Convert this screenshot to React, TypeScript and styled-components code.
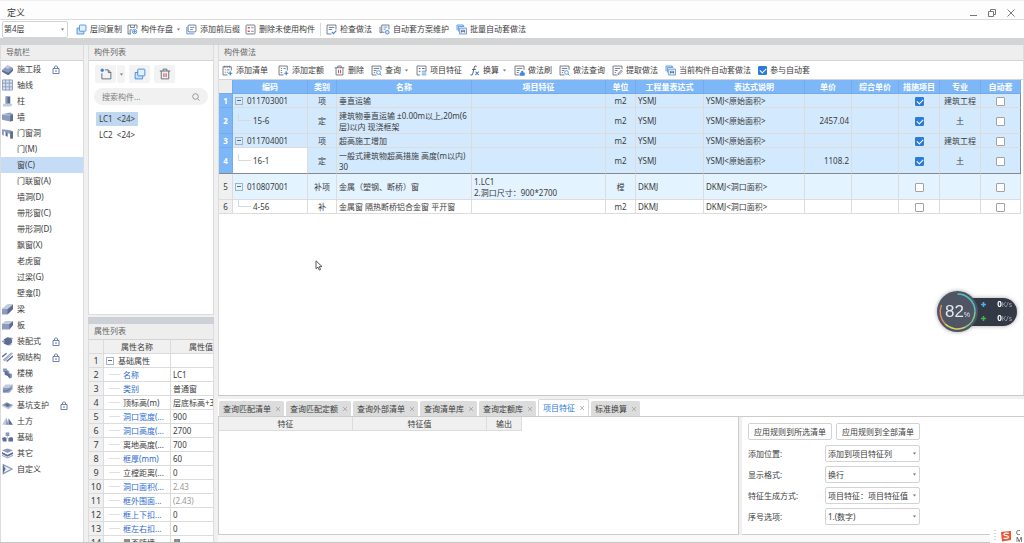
import React from 'react';
import styled, { createGlobalStyle, css } from 'styled-components';

const Global = createGlobalStyle`
  * { box-sizing: border-box; }
  body {
    margin: 0;
    background: #f0f0f0;
    color: #3c3c3c;
    font-family: "Noto Sans", "Noto Sans CJK SC", sans-serif;
    font-size: 8px;
    line-height: 12px;
  }
  button, input, select { font: inherit; color: inherit; margin: 0; }
  button { border: 0; padding: 0; background: none; cursor: pointer; white-space: nowrap; }
  ul { list-style: none; margin: 0; padding: 0; }
  h1, h2 { margin: 0; font-weight: 400; }
  svg { display: block; flex: none; }
`;

/* ---------- shell ---------- */

const Page = styled.div`
  height: 100vh;
  display: flex;
  flex-direction: column;
  overflow: hidden;
  border-bottom: 1px solid #c6c6c6;
`;

const TitleBar = styled.header`
  height: 19px;
  padding: 5px 8px 0 7px;
  display: flex;
  justify-content: space-between;
  align-items: center;
  background: #fdfdfd;
  border-top: 1px solid #f0f0f0;
`;

const Title = styled.h1`
  font-size: 9px;
  line-height: 13px;
`;

const WindowButtons = styled.div`
  display: flex;
  gap: 9px;
  color: #777;
`;

const TopToolbar = styled.div`
  height: 19px;
  padding: 0 2px;
  display: flex;
  align-items: center;
  background: #fff;
  border-top: 1px solid #dcdcdc;
`;

const Band = styled.div<{ $tint?: string }>`
  height: 7px;
  flex: none;
  background: ${p => p.$tint ?? '#d2d4d6'};
`;

const Splitter = styled.div<{ $line?: boolean }>`
  height: ${p => (p.$line ? '4px' : '3px')};
  flex: none;
  background: #f0f0f0;
  border-top: 1px solid ${p => (p.$line ? '#c8c8c8' : '#dcdcdc')};
`;

const Workspace = styled.div`
  flex: 1;
  min-height: 0;
  display: grid;
  grid-template-columns: 84px 126px minmax(0, 1fr);
  grid-template-rows: minmax(0, 1fr);
  column-gap: 4px;
`;

const Column = styled.div`
  min-height: 0;
  display: flex;
  flex-direction: column;
`;

const Panel = styled.section<{ $grow?: number }>`
  flex: ${p => p.$grow ?? 1} 1 0;
  min-height: 0;
  display: flex;
  flex-direction: column;
  overflow: hidden;
  background: #fff;
  border-left: 1px solid #dcdcdc;
  border-right: 1px solid #dcdcdc;
`;

const PanelTitle = styled.h2`
  height: 16px;
  flex: none;
  padding-left: 5px;
  font-size: 8px;
  line-height: 14px;
  color: #666;
  background: #eee;
  border-bottom: 1px solid #d4d4d4;
`;

/* ---------- toolbar parts ---------- */

const ToolGroup = styled.div<{ $gap: number; $after?: number }>`
  display: flex;
  align-items: center;
  gap: ${p => p.$gap}px;
  margin-right: ${p => p.$after ?? 0}px;
`;

const ToolButton = styled.button`
  display: flex;
  align-items: center;
  gap: 3px;
`;

const Separator = styled.span`
  width: 1px;
  height: 13px;
  background: #d8d8d8;
`;

const SelectBox = styled.div<{ $wide?: boolean }>`
  position: relative;
  width: ${p => (p.$wide ? '95px' : '66px')};
  height: 17px;
  flex: none;
  select {
    appearance: none;
    width: 100%;
    height: 100%;
    padding: 0 10px 0 ${p => (p.$wide ? '2px' : '1px')};
    border: 1px solid #d3d3d3;
    border-radius: 2px;
    background: #fff;
    outline: 0;
  }
  svg {
    position: absolute;
    right: 3px;
    top: 7px;
    pointer-events: none;
  }
`;

const Caret = () => (
  <svg width="5" height="3" viewBox="0 0 5 3"><path d="M.8.500h3.400L2.500 2.500z" fill="#777" /></svg>
);

function Select({ id, label, value, wide }: { id: string; label?: string; value: string; wide?: boolean }) {
  return (
    <SelectBox $wide={wide}>
      <select id={id} aria-label={label} defaultValue={value}><option>{value}</option></select>
      <Caret />
    </SelectBox>
  );
}

/* ---------- toolbar icons ---------- */

type Glyph = 'copy' | 'save' | 'prefix' | 'unused' | 'check' | 'scheme' | 'batch' | 'addList' | 'addQuota'
  | 'trash' | 'query' | 'feature' | 'fx' | 'brush' | 'extract' | 'new';

const INK = '#5b6473';
const BLUE = '#3f87d9';

const glyphs: Record<Glyph, React.ReactNode> = {
  copy: <><path d="M5 6H1.500v8.500h10V11" stroke={BLUE} fill="#cfe3f8" /><rect x="5" y="1.500" width="9.500" height="9" rx="1" stroke={BLUE} fill="#e3f0fd" /></>,
  save: <><path d="M6 14.500H1.500v-13h13V7" stroke={INK} /><path d="M5 1.500V5h6V1.500M4.500 14V8.500H7" stroke={INK} /><circle cx="11" cy="11" r="3.200" stroke={BLUE} /><path d="M11 9v4M9 11h4" stroke={BLUE} /></>,
  prefix: <><rect x="3" y="1.500" width="11.500" height="10" rx="1.500" stroke={INK} /><path d="M6 5h6M6 8h4" stroke={BLUE} /><path d="M1.200 4v10.300H12" stroke={BLUE} /></>,
  unused: <><rect x="1.500" y="1.500" width="13" height="13" rx="1" stroke={INK} /><path d="M4 5.500h3M4 10.500h3" stroke="#d9505a" strokeWidth="2.200" /><path d="M9 5.500h3.500M9 10.500h3.500" stroke={INK} /></>,
  check: <><path d="M8 14.500H1.500v-13h13V8" stroke={INK} /><path d="M4 5h8M4 8h5" stroke={INK} /><path d="M8.500 11.500l2.300 2.500L15 9.500" stroke={BLUE} strokeWidth="1.700" /></>,
  scheme: <><path d="M4 12.500H1.500V4M4 1.500h10.500V8M4 1.500v10.500h4" stroke={INK} /><path d="M6.500 4.500h5.500M6.500 7.500h3.500" stroke={BLUE} /><circle cx="12" cy="12" r="2.700" stroke={BLUE} fill="#cfe3f8" /></>,
  batch: <><path d="M1.500 9V1.500h9V3M3.500 11V3.500H12" stroke={BLUE} /><rect x="5.500" y="6" width="9.500" height="8.500" stroke={BLUE} /><path d="M8 12.500V9h4.500v3.500M8 11h4.500" stroke={INK} /></>,
  addList: <><path d="M8 14.500H1.500v-12h12V8" stroke={INK} /><path d="M4 1v3M7.500 1v3M11 1v3M4 7h1.500M7 7h4M4 10.500h1.500M7 10.500h2" stroke={INK} /><path d="M12 9v6M9 12h6" stroke={BLUE} strokeWidth="1.700" /></>,
  addQuota: <><path d="M8 14.500H1.500v-13h12V8" stroke={INK} /><path d="M4 5h2M8 5h3M4 8h2M4 11h2" stroke={INK} /><path d="M12 9v6M9 12h6" stroke={BLUE} strokeWidth="1.700" /></>,
  trash: <><path d="M1 4h14M5.500 4V1.500h5V4M3 4v10.500h10V4" stroke={INK} /><path d="M6.500 7v5M9.500 7v5" stroke="#d9505a" strokeWidth="1.500" /></>,
  query: <><path d="M8 14.500H1.500v-13h13V7" stroke={INK} /><path d="M4 5h8M4 8h4M4 11h2" stroke={INK} /><circle cx="11" cy="11" r="2.700" stroke={BLUE} /><path d="M13 13l2.300 2.300" stroke={BLUE} /></>,
  feature: <><path d="M6 14.500H1.500v-13h13V9" stroke={INK} /><path d="M4 5h2.500M4 9h2.500M9 5h3.500" stroke={INK} strokeWidth="1.600" /><path d="M8.500 9H15M8.500 11.700H15M8.500 14.300H15" stroke={BLUE} /></>,
  fx: <><path d="M11 2.200C9.500.8 8 1.500 7.500 4L5.600 12c-.6 2.500-2 3-3.600 2M4.500 6.500h5.500" stroke={INK} strokeWidth="1.500" /><path d="M9.500 9.500l4.500 5M14.300 9.500l-5 5" stroke={BLUE} strokeWidth="1.600" /></>,
  brush: <><path d="M8 14.500H1.500v-13h13V7" stroke={INK} /><path d="M4 5h8M4 8h4M4 11h3" stroke={INK} /><path d="M9 15v-3.500h2V9h2v2.500h2V15z" fill={BLUE} stroke={BLUE} /></>,
  extract: <><path d="M8 14.500H1.500v-13h13V6" stroke={INK} /><path d="M4 5h8M4 8h4M4 11h2" stroke={INK} /><path d="M8.500 13l5-5.500 1.500 1.500-5 5z" stroke={INK} /></>,
  new: <><path d="M6.500 2.500H11l3.500 3.500v8.500h-12V7" stroke={INK} /><path d="M11 2.500V6h3.500" stroke={INK} /><circle cx="3" cy="3" r="2.200" fill={BLUE} /></>,
};

const Icon = ({ name, size = 11 }: { name: Glyph; size?: number }) => (
  <svg width={size} height={size} viewBox="0 0 16 16" fill="none" strokeWidth="1.200">{glyphs[name]}</svg>
);

const Tool = ({ icon, label, menu }: { icon: Glyph; label: string; menu?: boolean }) => (
  <ToolButton type="button"><Icon name={icon} />{label}{menu && <Caret />}</ToolButton>
);

/* ---------- navigation ---------- */

const NavItem = styled.button<{ $child?: boolean; $active?: boolean }>`
  width: 100%;
  height: 16px;
  padding-left: ${p => (p.$child ? '16px' : '1px')};
  display: flex;
  align-items: center;
  gap: 4px;
  background: ${p => (p.$active ? '#c5dcf7' : 'transparent')};
`;

const LockMark = styled.span`
  margin-left: 7px;
`;

const D = '#5d6d93';
const M = '#8b9bbd';
const L = '#c3ccdf';

const shapes: Record<string, React.ReactNode> = {
  stage: <><path d="M0 7l6-5 6 3-5 6z" fill={M} /><path d="M0 7v2l7 4 5-5V5l-5 5z" fill={D} /><path d="M3 4l3-2 3 2-3 2z" fill={L} /></>,
  axis: <><path d="M.5.5h11v11H.5z" fill="#d9e0ee" stroke={M} /><path d="M4 0v12M8 0v12M0 4h12M0 8h12" stroke={M} /></>,
  column: <><path d="M4 1h5v8H4z" fill={D} /><path d="M4 1h2v8H4z" fill={M} /><path d="M1 9h10v2l-2 1H1z" fill={L} /></>,
  wall: <><path d="M0 3l9-2 3 2v7l-3 1-9-2z" fill={M} /><path d="M9 4l3-1v7l-3 1z" fill={D} /><path d="M0 3l9 1" stroke={L} /></>,
  opening: <><path d="M0 2l9 1 3 1v8H9V7L6 6v4l-2-1V5L2 4v5L0 8z" fill={M} /><path d="M9 4l3 1v7H9zM4 5l2 1v4l-2-1z" fill={D} /></>,
  beam: <><path d="M0 6l6-5h6v5l-6 6H0z" fill={M} /><path d="M6 6l6-5v5l-6 6z" fill={D} /><path d="M0 6l6-5h6L6 6z" fill={L} /></>,
  slab: <><path d="M0 5l4-3h8v4L8 11H0z" fill={M} /><path d="M8 5l4-3v4l-4 5z" fill={D} /><path d="M0 5l4-3h8L8 5z" fill={L} /></>,
  prefab: <><path d="M2 4l4-2 5 1v5l-4 3-5-2z" fill={D} /><path d="M0 6l3-1v3L0 7zM9 2l3 1-2 2zM8 9l3 1-3 1z" fill={M} /></>,
  steel: <><path d="M1 9l9-8 2 1-9 9z" fill={M} /><path d="M0 6l5-4M5 11l7-6" stroke={D} strokeWidth="1.500" /><path d="M2 10l9-8" stroke={L} /></>,
  stair: <><path d="M1 1h4l1 2 2 1v2l3 1v4l-3 1-2-3-3-1V5L1 4z" fill={M} /><path d="M1 4l5 0v2l3 2v4l-3-3-3-1V5z" fill={D} /></>,
  finish: <><path d="M1 4l3-3h8v5L9 9H1z" fill={L} /><path d="M1 5h7l3-3v4L8 10H1z" fill={M} /><path d="M1 8c3 1 6 0 8-3" stroke={D} fill="none" /></>,
  pit: <><path d="M0 6l5-3 7 3-5 4z" fill={M} /><path d="M3 6l3-2 3 2-3 2z" fill={D} /><path d="M0 6v1l7 4 5-4V6l-5 3z" fill={L} /></>,
  earth: <><path d="M0 10l4-7 2 7z" fill={L} /><path d="M5 2l2 8H4z" fill={M} /><path d="M7 3l5 7H7z" fill={D} /></>,
  base: <><path d="M4 1h4v4H4z" fill={M} /><path d="M0 7l3-1 2 1v4H1zM7 7l3-1 2 1v4H7z" fill={D} /><path d="M6 5v3" stroke={L} /></>,
  other: <><path d="M0 3l6-2 6 2-6 3z" fill={M} /><path d="M0 5l6 3 6-3v2L6 10 0 7z" fill={D} /><path d="M0 8l6 3 6-3v1l-6 3-6-3z" fill={M} /></>,
  custom: <><path d="M1.500 1.500L11 6l-9.500 5z" fill="#eef1f7" stroke={M} strokeWidth="1.500" /><path d="M1 1l3 5-3 5z" fill={D} /></>,
};

const LockIcon = () => (
  <svg width="8" height="9" viewBox="0 0 8 9" fill="none" stroke="#6b7ea6"><path d="M1 3.500h6v5H1zM2.500 3.500V1.700q1.500-1.700 3 0v1.800M4 5v2" /></svg>
);

type NavRow = { label: string; shape?: string; lock?: boolean; active?: boolean };
const navRows: NavRow[] = [
  { label: '施工段', shape: 'stage', lock: true },
  { label: '轴线', shape: 'axis' },
  { label: '柱', shape: 'column' },
  { label: '墙', shape: 'wall' },
  { label: '门窗洞', shape: 'opening' },
  { label: '门(M)' },
  { label: '窗(C)', active: true },
  { label: '门联窗(A)' },
  { label: '墙洞(D)' },
  { label: '带形窗(C)' },
  { label: '带形洞(D)' },
  { label: '飘窗(X)' },
  { label: '老虎窗' },
  { label: '过梁(G)' },
  { label: '壁龛(I)' },
  { label: '梁', shape: 'beam' },
  { label: '板', shape: 'slab' },
  { label: '装配式', shape: 'prefab', lock: true },
  { label: '钢结构', shape: 'steel', lock: true },
  { label: '楼梯', shape: 'stair' },
  { label: '装修', shape: 'finish' },
  { label: '基坑支护', shape: 'pit', lock: true },
  { label: '土方', shape: 'earth' },
  { label: '基础', shape: 'base' },
  { label: '其它', shape: 'other' },
  { label: '自定义', shape: 'custom' },
];

/* ---------- component list ---------- */

const ListTools = styled.div`
  display: flex;
  gap: 4px;
  padding: 4px 6px 5px;
`;

const SquareTool = styled.button<{ $narrow?: boolean }>`
  width: ${p => (p.$narrow ? '8px' : '21px')};
  height: 18px;
  display: flex;
  align-items: center;
  justify-content: center;
  border-radius: 2px;
  background: #f3f3f3;
`;

const SplitTool = styled.div`
  display: flex;
  gap: 1px;
`;

const SearchBox = styled.label`
  height: 17px;
  margin: 0 5px 7px;
  padding: 0 8px;
  display: flex;
  align-items: center;
  border-radius: 9px;
  background: #f1f1f1;
  input {
    flex: 1;
    min-width: 0;
    border: 0;
    padding: 0;
    outline: 0;
    background: transparent;
  }
  input::placeholder { color: #808080; opacity: 1; }
`;

const ListItem = styled.button<{ $active?: boolean }>`
  align-self: flex-start;
  height: 14px;
  margin: 0 0 2px 7px;
  padding: 0 3px;
  border-radius: 1px;
  white-space: pre;
  background: ${p => (p.$active ? '#bfd7f0' : 'transparent')};
`;

/* ---------- data tables ---------- */

const baseTable = css`
  width: 100%;
  table-layout: fixed;
  border-collapse: separate;
  border-spacing: 0;
  th, td {
    padding: 0 2px;
    font-weight: 400;
    white-space: nowrap;
    overflow: hidden;
    border-right: 1px solid #dcdcdc;
    border-bottom: 1px solid #dcdcdc;
  }
`;

const PropTable = styled.table`
  ${baseTable}
  line-height: 11px;
  th, td { height: 14px; }
  thead th { background: #f0f0f0; }
  tbody th { background: #f0f0f0; font-size: 9px; padding: 0; }
  th:last-child, td:last-child { border-right: 0; padding-right: 0; }
`;

const PropHead = styled.th`
  text-align: right;
`;

const PropName = styled.td<{ $link?: boolean }>`
  color: ${p => (p.$link ? '#2e6bd0' : 'inherit')};
`;

const PropLabel = styled.span`
  display: flex;
  align-items: center;
  gap: 3px;
  &::before {
    content: '';
    width: 11px;
    margin-left: 3px;
    border-top: 1px solid #e0e0e0;
  }
`;

const PropValue = styled.td<{ $muted?: boolean }>`
  color: ${p => (p.$muted ? '#999' : 'inherit')};
`;

const GroupLabel = styled.span`
  display: flex;
  align-items: center;
  gap: 4px;
`;

const ToggleButton = styled.button`
  width: 8px;
  height: 8px;
  flex: none;
  display: flex;
  align-items: center;
  justify-content: center;
  border: 1px solid #a3b1c0;
  &::after {
    content: '';
    width: 4px;
    height: 1px;
    background: #667;
  }
`;

const Scroller = styled.div<{ $inset?: boolean }>`
  flex: 1;
  min-height: 0;
  overflow: hidden;
  padding: ${p => (p.$inset ? '0 2px 0 0' : '0')};
`;

const GridTable = styled.table`
  ${baseTable}
  line-height: 11px;
  thead th {
    height: 14px;
    color: #fff;
    font-weight: 700;
    background: #7db7f8;
    border-color: #74abea;
  }
  thead th:first-child { background: #eee; }
`;

const GridBody = styled.tbody<{ $selected?: boolean }>`
  ${p => p.$selected && css`
    tr { background: #d3e9fe; }
    tr > th { background: #7db7f8; color: #fff; font-weight: 700; border-color: #74abea; }
    tr > td:last-child { border-right-color: #888; }
    tr:last-child > * { border-bottom-color: #888; }
  `}
`;

const GridRow = styled.tr<{ $tall?: boolean; $tint?: boolean }>`
  height: ${p => (p.$tall ? '26px' : '14px')};
  background: ${p => (p.$tint ? '#e3f3ff' : '#fff')};
  & > th { background: #f0f0f0; padding: 0; }
`;

const Cell = styled.td<{ $align?: 'center' | 'right'; $white?: boolean }>`
  text-align: ${p => p.$align ?? 'left'};
  ${p => p.$white && css`background: #fff;`}
`;

const ChildCode = styled.span`
  display: flex;
  align-items: center;
  gap: 2px;
  &::before {
    content: '';
    width: 12px;
    height: 6px;
    margin: -6px 0 0 3px;
    border: solid #d5dade;
    border-width: 0 0 1px 1px;
  }
`;

const Lines = styled.span`
  white-space: pre-line;
`;

const Tick = styled.input.attrs({ type: 'checkbox' })`
  appearance: none;
  position: relative;
  width: 9px;
  height: 9px;
  flex: none;
  vertical-align: middle;
  border: 1px solid #a3a3a3;
  border-radius: 1px;
  background: #fff;
  &:checked { background: #2b7cd9; border-color: #2b7cd9; }
  &:checked::after {
    content: '';
    position: absolute;
    left: 2px;
    top: 0;
    width: 3px;
    height: 5px;
    border: solid #fff;
    border-width: 0 1px 1px 0;
    transform: rotate(45deg);
  }
`;

const TickLabel = styled.label`
  display: flex;
  align-items: center;
  gap: 3px;
`;

const GridToolbar = styled.div`
  height: 19px;
  flex: none;
  padding-left: 3px;
  display: flex;
  align-items: center;
  border-bottom: 1px solid #d4d4d4;
`;

type Item = {
  code: string; child?: boolean; kind: string; name: string; feature?: string; unit: string;
  expr: string; note: string; price?: string; measure?: boolean; major?: string; tall?: boolean; tint?: boolean; white?: boolean;
};

const selectedItems: Item[] = [
  { code: '011703001', kind: '项', name: '垂直运输', unit: 'm2', expr: 'YSMJ', note: 'YSMJ<原始面积>', measure: true, major: '建筑工程' },
  { code: '15-6', child: true, kind: '定', name: '建筑物垂直运输 ±0.00m以上,20m(6\n层)以内 现浇框架', unit: 'm2', expr: 'YSMJ', note: 'YSMJ<原始面积>', price: '2457.04', measure: true, major: '土', tall: true },
  { code: '011704001', kind: '项', name: '超高施工增加', unit: 'm2', expr: 'YSMJ', note: 'YSMJ<原始面积>', measure: true, major: '建筑工程' },
  { code: '16-1', child: true, kind: '定', name: '一般式建筑物超高措施 高度(m以内)\n30', unit: 'm2', expr: 'YSMJ', note: 'YSMJ<原始面积>', price: '1108.2', measure: true, major: '土', tall: true, white: true },
];

const otherItems: Item[] = [
  { code: '010807001', kind: '补项', name: '金属（塑钢、断桥）窗', feature: '1.LC1\n2.洞口尺寸：900*2700', unit: '樘', expr: 'DKMJ', note: 'DKMJ<洞口面积>', tall: true, tint: true },
  { code: '4-56', child: true, kind: '补', name: '金属窗 隔热断桥铝合金窗 平开窗', unit: 'm2', expr: 'DKMJ', note: 'DKMJ<洞口面积>' },
];

const gridColumns: [string, number][] = [
  ['', 14], ['编码', 75], ['类别', 29], ['名称', 135], ['项目特征', 134], ['单位', 30], ['工程量表达式', 68],
  ['表达式说明', 101], ['单价', 47], ['综合单价', 47], ['措施项目', 41], ['专业', 41], ['自动套', 40],
];

const renderItem = (item: Item, no: number) => (
  <GridRow key={no} $tall={item.tall} $tint={item.tint}>
    <th scope="row">{no}</th>
    <Cell $white={item.white}>
      {item.child
        ? <ChildCode>{item.code}</ChildCode>
        : <GroupLabel><ToggleButton type="button" aria-label="折叠" />{item.code}</GroupLabel>}
    </Cell>
    <Cell $align="center">{item.kind}</Cell>
    <Cell><Lines>{item.name}</Lines></Cell>
    <Cell><Lines>{item.feature}</Lines></Cell>
    <Cell $align="center">{item.unit}</Cell>
    <Cell>{item.expr}</Cell>
    <Cell>{item.note}</Cell>
    <Cell $align="right">{item.price}</Cell>
    <Cell />
    <Cell $align="center"><Tick aria-label="措施项目" defaultChecked={item.measure} /></Cell>
    <Cell $align="center">{item.major}</Cell>
    <Cell $align="center"><Tick aria-label="自动套" /></Cell>
  </GridRow>
);

type Prop = { name: string; value: string; link?: boolean; muted?: boolean };
const props: Prop[] = [
  { name: '名称', value: 'LC1', link: true },
  { name: '类别', value: '普通窗', link: true },
  { name: '顶标高(m)', value: '层底标高+3' },
  { name: '洞口宽度(...', value: '900', link: true },
  { name: '洞口高度(...', value: '2700', link: true },
  { name: '离地高度(...', value: '700' },
  { name: '框厚(mm)', value: '60', link: true },
  { name: '立樘距离(...', value: '0' },
  { name: '洞口面积(...', value: '2.43', link: true, muted: true },
  { name: '框外围面...', value: '(2.43)', link: true, muted: true },
  { name: '框上下扣...', value: '0', link: true },
  { name: '框左右扣...', value: '0', link: true },
  { name: '是否随墙...', value: '是' },
];

/* ---------- lower area ---------- */

const TabBar = styled.div`
  height: 18px;
  flex: none;
  padding-left: 1px;
  display: flex;
  align-items: flex-end;
  gap: 2px;
  background: #fff;
  border-bottom: 1px solid #ccc;
`;

const Tab = styled.button<{ $active?: boolean }>`
  height: ${p => (p.$active ? '17px' : '15px')};
  padding: 0 4px;
  display: flex;
  align-items: center;
  gap: 5px;
  border-radius: 2px 2px 0 0;
  background: ${p => (p.$active ? '#fff' : '#dcdcdc')};
  color: ${p => (p.$active ? '#2b7cd9' : 'inherit')};
  ${p => p.$active && css`border: 1px solid #d8d8d8; border-bottom: 0;`}
`;

const Lower = styled.section`
  flex: none;
  display: flex;
  flex-direction: column;
`;

const LowerBody = styled.div`
  display: grid;
  grid-template-columns: minmax(0, 521fr) minmax(0, 282fr);
  column-gap: 3px;
`;

const FeaturePane = styled.div`
  background: #fff;
  border: solid #ccc;
  border-width: 0 1px 1px;
`;

const FeatureTable = styled.table`
  ${baseTable}
  width: 58%;
  th { height: 14px; background: #f0f0f0; }
`;

const RulePane = styled.form`
  padding: 6px 6px 9px;
  display: flex;
  flex-direction: column;
  gap: 4px;
  background: #fff;
  border-bottom: 1px solid #ccc;
`;

const RuleButtons = styled.div`
  display: flex;
  gap: 4px;
  margin-bottom: 1px;
`;

const RuleButton = styled.button`
  width: 84px;
  height: 17px;
  border: 1px solid #d3d3d3;
  border-radius: 2px;
  background: #fff;
`;

const RuleField = styled.div`
  display: grid;
  grid-template-columns: 77px auto;
  justify-content: start;
  align-items: center;
`;

const StatusStrip = styled.footer`
  height: 7px;
  background: #f9f9f9;
`;

/* ---------- floating pieces ---------- */

const Monitor = styled.aside`
  position: fixed;
  right: 7px;
  top: 291px;
  display: flex;
  align-items: center;
  color: #fff;
  filter: drop-shadow(0 0 2px rgba(0, 0, 0, 0.35));
`;

const Gauge = styled.div`
  position: relative;
  z-index: 1;
  width: 41px;
  height: 41px;
  display: flex;
  align-items: center;
  justify-content: center;
  border-radius: 50%;
  background: #4f5562;
  font-family: "Liberation Sans", sans-serif;
  font-size: 17px;
  color: #e6e9ee;
  small { font-size: 7px; padding-top: 6px; }
  svg { position: absolute; inset: 0; }
`;

const Speeds = styled.div`
  width: 51px;
  height: 28px;
  margin-left: -12px;
  padding: 0 5px 0 15px;
  display: grid;
  grid-template-rows: 14px 14px;
  border-radius: 0 14px 14px 0;
  background: #343946;
`;

const Speed = styled.div`
  display: flex;
  justify-content: space-between;
  align-items: center;
  small { font-size: 7px; color: #a5a9b3; font-weight: 400; }
  b { font-size: 8px; }
`;

const PlusIcon = ({ color }: { color: string }) => (
  <svg width="5" height="5" viewBox="0 0 5 5"><path d="M2.500 0v5M0 2.500h5" stroke={color} strokeWidth="1.500" /></svg>
);

const Pointer = styled.svg`
  position: fixed;
  left: 315px;
  top: 260px;
`;

const InputMethod = styled.aside`
  position: fixed;
  right: 0;
  bottom: 0;
  width: 34px;
  height: 14px;
  padding-left: 4px;
  display: flex;
  align-items: center;
  gap: 4px;
  background: #fff;
`;

const ModeMark = styled.span`
  font-size: 7px;
  line-height: 7px;
  white-space: pre-line;
`;

export default function App() {
  const tabs = ['查询匹配清单', '查询匹配定额', '查询外部清单', '查询清单库', '查询定额库', '项目特征', '标准换算'];
  return (
    <Page>
      <Global />
      <TitleBar>
        <Title>定义</Title>
        <WindowButtons>
          <button type="button" aria-label="最小化"><svg width="10" height="10" viewBox="0 0 10 10"><path d="M2 7.500h7" stroke="currentColor" /></svg></button>
          <button type="button" aria-label="还原"><svg width="10" height="10" viewBox="0 0 10 10" fill="none" stroke="currentColor"><path d="M1.500 3.500h5v5h-5zM3.500 3.500v-2h5v5h-2" /></svg></button>
          <button type="button" aria-label="关闭"><svg width="10" height="10" viewBox="0 0 10 10"><path d="M1.500 1.500l7 7M8.500 1.500l-7 7" stroke="currentColor" /></svg></button>
        </WindowButtons>
      </TitleBar>
      <TopToolbar>
        <ToolGroup $gap={8} $after={5}>
          <Select id="floor" label="楼层" value="第4层" />
          <Tool icon="copy" label="层间复制" />
        </ToolGroup>
        <ToolGroup $gap={5} $after={5}>
          <Tool icon="save" label="构件存盘" menu />
          <Tool icon="prefix" label="添加前后缀" />
          <Tool icon="unused" label="删除未使用构件" />
          <Separator />
        </ToolGroup>
        <ToolGroup $gap={7}>
          <Tool icon="check" label="检查做法" />
          <Tool icon="scheme" label="自动套方案维护" />
          <Tool icon="batch" label="批量自动套做法" />
        </ToolGroup>
      </TopToolbar>
      <Band />
      <Workspace>
        <Panel as="nav">
          <PanelTitle>导航栏</PanelTitle>
          <ul>
            {navRows.map(row => (
              <li key={row.label}>
                <NavItem type="button" $child={!row.shape} $active={row.active}>
                  {row.shape && <svg width="11" height="12" viewBox="0 0 12 12">{shapes[row.shape]}</svg>}
                  {row.label}
                  {row.lock && <LockMark><LockIcon /></LockMark>}
                </NavItem>
              </li>
            ))}
          </ul>
        </Panel>

        <Column>
          <Panel $grow={269}>
            <PanelTitle>构件列表</PanelTitle>
            <ListTools>
              <SplitTool>
                <SquareTool type="button" aria-label="新建"><Icon name="new" size={12} /></SquareTool>
                <SquareTool type="button" aria-label="新建选项" $narrow><Caret /></SquareTool>
              </SplitTool>
              <SquareTool type="button" aria-label="复制"><Icon name="copy" size={12} /></SquareTool>
              <SquareTool type="button" aria-label="删除"><Icon name="trash" size={12} /></SquareTool>
            </ListTools>
            <SearchBox>
              <input aria-label="搜索构件" placeholder="搜索构件..." />
              <svg width="8" height="8" viewBox="0 0 8 8" fill="none" stroke="#999"><circle cx="3.500" cy="3.500" r="2.800" /><path d="M5.500 5.500l2 2" /></svg>
            </SearchBox>
            <ListItem type="button" $active>{'LC1  <24>'}</ListItem>
            <ListItem type="button">{'LC2  <24>'}</ListItem>
          </Panel>
          <Splitter />
          <Band $tint="#cdd0d6" />
          <Panel $grow={218}>
            <PanelTitle>属性列表</PanelTitle>
            <Scroller>
              <PropTable>
                <colgroup><col width="15" /><col width="67" /><col /></colgroup>
                <thead><tr><th /><th>属性名称</th><PropHead>属性值</PropHead></tr></thead>
                <tbody>
                  <tr>
                    <th scope="row">1</th>
                    <td><GroupLabel><ToggleButton type="button" aria-label="折叠" />基础属性</GroupLabel></td>
                    <td />
                  </tr>
                  {props.map((p, i) => (
                    <tr key={p.name}>
                      <th scope="row">{i + 2}</th>
                      <PropName $link={p.link}><PropLabel>{p.name}</PropLabel></PropName>
                      <PropValue $muted={p.muted}>{p.value}</PropValue>
                    </tr>
                  ))}
                </tbody>
              </PropTable>
            </Scroller>
          </Panel>
        </Column>

        <Column>
          <Panel>
            <PanelTitle>构件做法</PanelTitle>
            <GridToolbar>
              <ToolGroup $gap={10} $after={7}>
                <Tool icon="addList" label="添加清单" />
                <Tool icon="addQuota" label="添加定额" />
                <Tool icon="trash" label="删除" />
              </ToolGroup>
              <ToolGroup $gap={7}>
                <Tool icon="query" label="查询" menu />
                <Tool icon="feature" label="项目特征" />
                <Tool icon="fx" label="换算" menu />
                <Tool icon="brush" label="做法刷" />
                <Tool icon="query" label="做法查询" />
                <Tool icon="extract" label="提取做法" />
                <Tool icon="batch" label="当前构件自动套做法" />
                <TickLabel><Tick defaultChecked />参与自动套</TickLabel>
              </ToolGroup>
            </GridToolbar>
            <Scroller $inset>
              <GridTable>
                <colgroup>{gridColumns.map(([name, width]) => <col key={name} width={width} />)}</colgroup>
                <thead><tr>{gridColumns.map(([name]) => <th key={name}>{name}</th>)}</tr></thead>
                <GridBody $selected>{selectedItems.map((it, i) => renderItem(it, i + 1))}</GridBody>
                <GridBody>{otherItems.map((it, i) => renderItem(it, i + 5))}</GridBody>
              </GridTable>
            </Scroller>
          </Panel>
          <Splitter $line />
          <Lower>
            <TabBar role="tablist">
              {tabs.map(t => (
                <Tab key={t} type="button" role="tab" aria-selected={t === '项目特征'} $active={t === '项目特征'}>
                  {t}
                  <svg width="4" height="4" viewBox="0 0 4 4"><path d="M0 0l4 4M4 0L0 4" stroke="#999" strokeWidth=".7" /></svg>
                </Tab>
              ))}
            </TabBar>
            <LowerBody>
              <FeaturePane>
                <FeatureTable>
                  <colgroup><col width="134" /><col width="134" /><col width="35" /></colgroup>
                  <thead><tr><th>特征</th><th>特征值</th><th>输出</th></tr></thead>
                </FeatureTable>
              </FeaturePane>
              <RulePane>
                <RuleButtons>
                  <RuleButton type="button">应用规则到所选清单</RuleButton>
                  <RuleButton type="button">应用规则到全部清单</RuleButton>
                </RuleButtons>
                <RuleField><label htmlFor="position">添加位置:</label><Select wide id="position" value="添加到项目特征列" /></RuleField>
                <RuleField><label htmlFor="format">显示格式:</label><Select wide id="format" value="换行" /></RuleField>
                <RuleField><label htmlFor="method">特征生成方式:</label><Select wide id="method" value="项目特征：项目特征值" /></RuleField>
                <RuleField><label htmlFor="order">序号选项:</label><Select wide id="order" value="1.(数字)" /></RuleField>
              </RulePane>
            </LowerBody>
            <StatusStrip />
          </Lower>
        </Column>
      </Workspace>

      <Pointer width="8" height="11" viewBox="0 0 8 11"><path d="M1 .8v8l2-1.700 1.300 3 1.300-.6L4.300 6.600H7z" fill="#fff" stroke="#333" strokeWidth=".8" /></Pointer>

      <Monitor>
        <Gauge>
          <svg width="41" height="41" viewBox="0 0 41 41" fill="none" strokeWidth="1.500">
            <path d="M20.500 3A17.500 17.500 0 0 1 38 20.500" stroke="#52c3c4" />
            <path d="M38 20.500A17.500 17.500 0 0 1 28 36.300" stroke="#80cf90" />
            <path d="M28 36.300A17.500 17.500 0 0 1 8 32.800" stroke="#d9cf62" />
            <path d="M8 32.800A17.500 17.500 0 0 1 4.500 14" stroke="#dd8a63" />
          </svg>
          82<small>%</small>
        </Gauge>
        <Speeds>
          <Speed><PlusIcon color="#4fb3e8" /><span><b>0</b><small>K/s</small></span></Speed>
          <Speed><PlusIcon color="#43b649" /><span><b>0</b><small>K/s</small></span></Speed>
        </Speeds>
      </Monitor>

      <InputMethod>
        <svg width="2" height="12" viewBox="0 0 2 12"><path d="M1 0v12" stroke="#aaa" strokeDasharray="1 2" /></svg>
        <svg width="12" height="12" viewBox="0 0 12 12"><path d="M1 2l10-1v9L2 11.500z" fill="#e8552d" /><path d="M8.800 3.400c-2-.6-5-.5-5 1 0 1.800 4.800.8 4.800 2.700 0 1.500-3 1.700-5 1" fill="none" stroke="#fff" strokeWidth="1.300" /></svg>
        <ModeMark>{'C\nM'}</ModeMark>
      </InputMethod>
    </Page>
  );
}
